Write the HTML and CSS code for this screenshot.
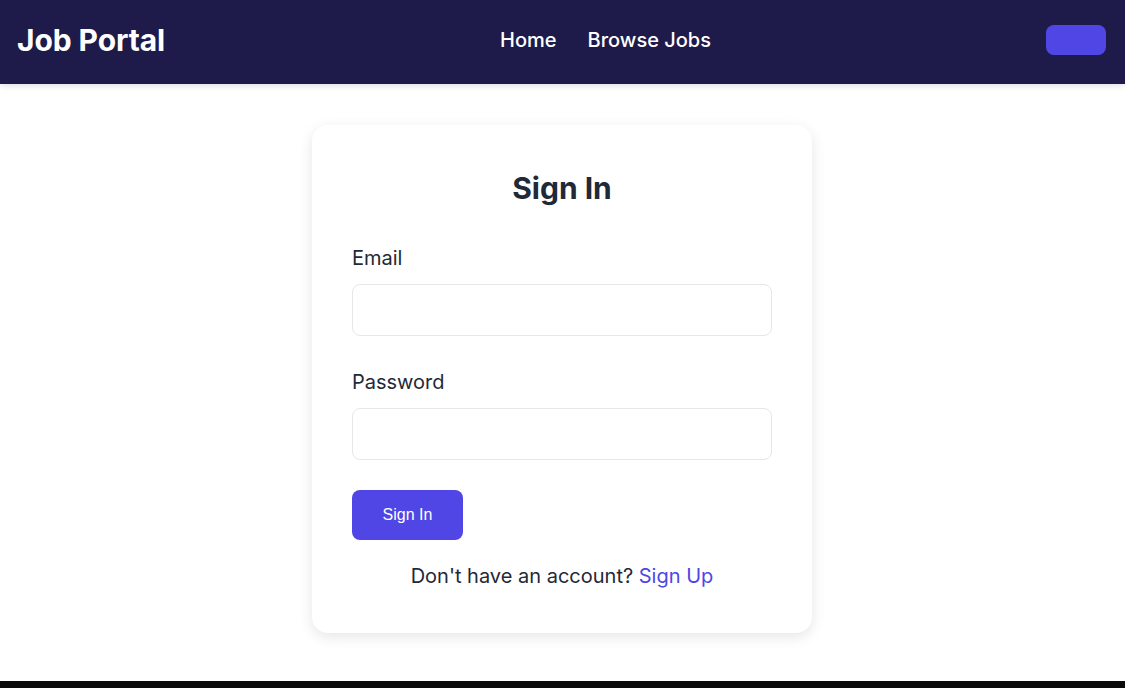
FILE: index.html
```html
<!DOCTYPE html>
<html lang="en">
<head>
<meta charset="utf-8">
<title>Job Portal - Sign In</title>
<link rel="stylesheet" href="styles.css">
</head>
<body>
<header class="topbar">
  <a class="logo" href="#">Job Portal</a>
  <nav class="nav">
    <a href="#">Home</a>
    <a href="#">Browse Jobs</a>
  </nav>
  <button class="top-btn" type="button" aria-label="Account"></button>
</header>
<main class="main">
  <section class="card">
    <h1 class="card-title">Sign In</h1>
    <form class="form">
      <label class="field">
        <span class="field-label">Email</span>
        <input class="input" type="email">
      </label>
      <label class="field">
        <span class="field-label">Password</span>
        <input class="input" type="password">
      </label>
      <button class="submit" type="button">Sign In</button>
    </form>
    <p class="switch">Don't have an account? <a href="#">Sign Up</a></p>
  </section>
</main>
<footer class="footer"></footer>
</body>
</html>
```
FILE: styles.css
```css
* { box-sizing: border-box; }
html, body { margin: 0; padding: 0; }
body {
  font-family: Inter, "Noto Sans", "Liberation Sans", sans-serif;
  color: #1f2937;
  background: #ffffff;
}
.topbar {
  height: 84px;
  background: #1e1b4b;
  display: flex;
  align-items: center;
  justify-content: space-between;
  padding: 0 19px 4px 17px;
  box-shadow: 0 2px 6px rgba(0, 0, 0, 0.12);
  position: relative;
  z-index: 1;
}
.logo {
  color: #ffffff;
  text-decoration: none;
  font-size: 30px;
  font-weight: 700;
  letter-spacing: -0.1px;
}
.nav {
  display: flex;
  gap: 31px;
}
.nav a {
  color: #ffffff;
  text-decoration: none;
  font-size: 20px;
  font-weight: 500;
}
.top-btn {
  width: 60px;
  height: 30px;
  border: none;
  border-radius: 8px;
  background: #4f46e5;
  padding: 0;
}
.main {
  display: flex;
  justify-content: center;
  padding: 41px 1px 48px 0;
}
.card {
  width: 500px;
  background: #ffffff;
  border-radius: 16px;
  box-shadow: 0 4px 14px rgba(0, 0, 0, 0.10);
  padding: 40px 40px 43px;
}
.card-title {
  margin: 0 0 34px;
  text-align: center;
  font-size: 30px;
  font-weight: 700;
  line-height: 46px;
  color: #1f2937;
}
.form {
  display: flex;
  flex-direction: column;
  align-items: flex-start;
}
.field {
  display: flex;
  flex-direction: column;
  width: 100%;
  margin-bottom: 33px;
}
.field-label {
  font-size: 20px;
  line-height: 27px;
  margin-bottom: 12px;
  color: #1f2937;
}
.input {
  width: 100%;
  height: 52px;
  border: 1px solid #e5e7eb;
  border-radius: 8px;
  padding: 0 14px;
  font-size: 16px;
  background: #ffffff;
}
.field + .field { margin-bottom: 30px; }
.submit {
  width: 111px;
  height: 50px;
  padding: 0;
  border: none;
  border-radius: 8px;
  background: #4f46e5;
  color: #ffffff;
  font-family: "Liberation Sans", Arial, sans-serif;
  font-size: 16px;
}
.switch {
  margin: 23px 0 0;
  text-align: center;
  font-size: 20px;
  line-height: 27px;
  color: #1f2937;
}
.switch a {
  color: #4f46e5;
  text-decoration: none;
}
.footer {
  height: 40px;
  background: #0a0a0a;
}
```
